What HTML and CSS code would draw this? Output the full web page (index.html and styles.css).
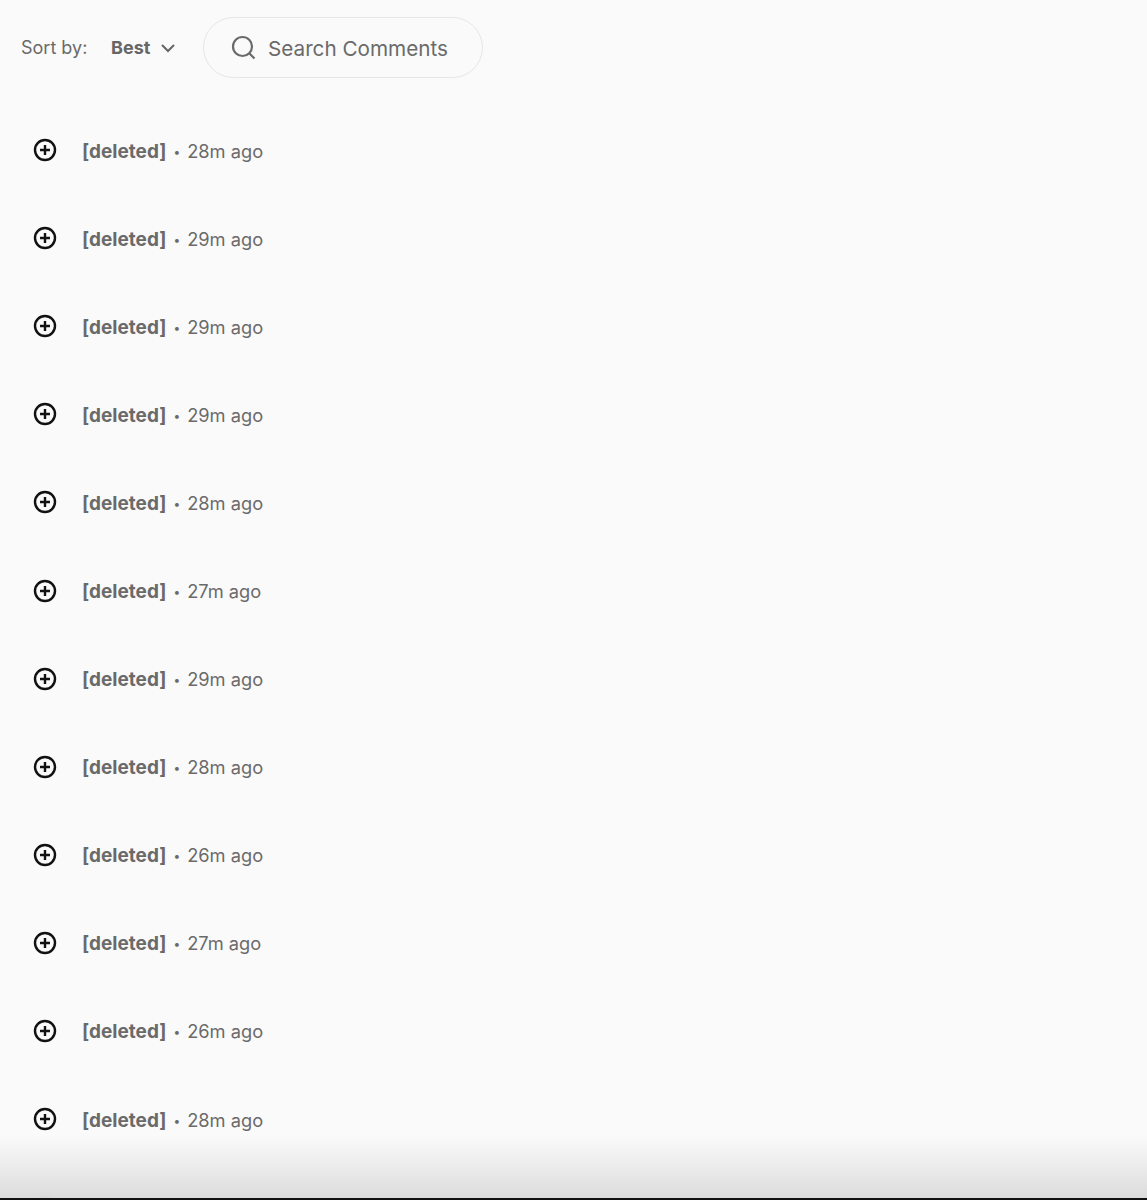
FILE: index.html
```html
<!DOCTYPE html>
<html lang="en">
<head>
  <meta charset="UTF-8" />
  <title>Comments</title>
  <link rel="stylesheet" href="styles.css">
</head>
<body>
  <div class="toolbar">
    <span class="sort-label">Sort by:</span>
    <button class="sort-btn">Best
      <svg class="chevron" width="16" height="16" viewBox="0 0 16 16"><path d="M2 5l6 6 6-6" /></svg>
    </button>
    <div class="search-box">
      <svg class="search-icon" width="26" height="26" viewBox="0 0 26 26"><circle cx="11.500" cy="11.500" r="9.500" /><path d="M18.500 18.500l5 5" /></svg>
      <span class="search-text">Search Comments</span>
    </div>
  </div>

  <div class="comments" id="comments">
    <div class="comment"><svg class="expand" width="24" height="24" viewBox="0 0 24 24"><circle cx="12" cy="12" r="10" /><path d="M12 7v10M7 12h10" /></svg><span class="author">[deleted]</span><span class="dot">•</span><span class="time">28m ago</span></div>
    <div class="comment"><svg class="expand" width="24" height="24" viewBox="0 0 24 24"><circle cx="12" cy="12" r="10" /><path d="M12 7v10M7 12h10" /></svg><span class="author">[deleted]</span><span class="dot">•</span><span class="time">29m ago</span></div>
    <div class="comment"><svg class="expand" width="24" height="24" viewBox="0 0 24 24"><circle cx="12" cy="12" r="10" /><path d="M12 7v10M7 12h10" /></svg><span class="author">[deleted]</span><span class="dot">•</span><span class="time">29m ago</span></div>
    <div class="comment"><svg class="expand" width="24" height="24" viewBox="0 0 24 24"><circle cx="12" cy="12" r="10" /><path d="M12 7v10M7 12h10" /></svg><span class="author">[deleted]</span><span class="dot">•</span><span class="time">29m ago</span></div>
    <div class="comment"><svg class="expand" width="24" height="24" viewBox="0 0 24 24"><circle cx="12" cy="12" r="10" /><path d="M12 7v10M7 12h10" /></svg><span class="author">[deleted]</span><span class="dot">•</span><span class="time">28m ago</span></div>
    <div class="comment"><svg class="expand" width="24" height="24" viewBox="0 0 24 24"><circle cx="12" cy="12" r="10" /><path d="M12 7v10M7 12h10" /></svg><span class="author">[deleted]</span><span class="dot">•</span><span class="time">27m ago</span></div>
    <div class="comment"><svg class="expand" width="24" height="24" viewBox="0 0 24 24"><circle cx="12" cy="12" r="10" /><path d="M12 7v10M7 12h10" /></svg><span class="author">[deleted]</span><span class="dot">•</span><span class="time">29m ago</span></div>
    <div class="comment"><svg class="expand" width="24" height="24" viewBox="0 0 24 24"><circle cx="12" cy="12" r="10" /><path d="M12 7v10M7 12h10" /></svg><span class="author">[deleted]</span><span class="dot">•</span><span class="time">28m ago</span></div>
    <div class="comment"><svg class="expand" width="24" height="24" viewBox="0 0 24 24"><circle cx="12" cy="12" r="10" /><path d="M12 7v10M7 12h10" /></svg><span class="author">[deleted]</span><span class="dot">•</span><span class="time">26m ago</span></div>
    <div class="comment"><svg class="expand" width="24" height="24" viewBox="0 0 24 24"><circle cx="12" cy="12" r="10" /><path d="M12 7v10M7 12h10" /></svg><span class="author">[deleted]</span><span class="dot">•</span><span class="time">27m ago</span></div>
    <div class="comment"><svg class="expand" width="24" height="24" viewBox="0 0 24 24"><circle cx="12" cy="12" r="10" /><path d="M12 7v10M7 12h10" /></svg><span class="author">[deleted]</span><span class="dot">•</span><span class="time">26m ago</span></div>
    <div class="comment"><svg class="expand" width="24" height="24" viewBox="0 0 24 24"><circle cx="12" cy="12" r="10" /><path d="M12 7v10M7 12h10" /></svg><span class="author">[deleted]</span><span class="dot">•</span><span class="time">28m ago</span></div>
    <div class="comment"><svg class="expand" width="24" height="24" viewBox="0 0 24 24"><circle cx="12" cy="12" r="10" /><path d="M12 7v10M7 12h10" /></svg></div>
  </div>

  <div class="bottom-fade"></div>
</body>
</html>
```

FILE: styles.css
```css
html, body {
  height: 1200px;
  overflow: hidden;
}

body {
  font-family: 'Inter', sans-serif;
  background-color: #fafafa;
  color: #6a6a6a;
  margin: 0;
  position: relative;
}

.toolbar {
  display: flex;
  align-items: center;
  padding: 17px 0 0 21px;
}

.sort-label {
  font-size: 18px;
  width: 90px;
}

.sort-btn {
  display: flex;
  align-items: center;
  gap: 10px;
  width: 92px;
  padding: 0;
  border: none;
  background: none;
  color: #666;
  font-family: inherit;
  font-size: 18px;
  font-weight: 700;
}

.chevron path {
  fill: none;
  stroke: #666;
  stroke-width: 2;
}

.search-box {
  display: flex;
  align-items: center;
  gap: 11px;
  box-sizing: border-box;
  width: 280px;
  height: 61px;
  padding-left: 27px;
  border: 1px solid #e6e6e6;
  border-radius: 31px;
  font-size: 20.7px;
}

.search-text {
  padding-top: 2px;
}

.search-icon circle,
.search-icon path {
  fill: none;
  stroke: #6a6a6a;
  stroke-width: 2.2;
}

.comments {
  padding-top: 29px;
}

.comment {
  display: flex;
  align-items: center;
  height: 88.1px;
  padding-left: 33px;
  font-size: 18.25px;
}

.expand {
  margin: 0 25px 2px 0;
  flex-shrink: 0;
}

.expand circle,
.expand path {
  fill: none;
  stroke: #111;
  stroke-width: 2.4;
}

.author {
  font-size: 19px;
  font-weight: 700;
  color: #6a6a6a;
}

.dot {
  margin: 0 7px;
  font-size: 12px;
}

.time {
  padding-bottom: 1px;
}

.bottom-fade {
  position: absolute;
  left: 0;
  right: 0;
  bottom: 0;
  height: 62px;
  background: linear-gradient(to bottom, rgba(250, 250, 250, 0), #dcdcdc);
  border-bottom: 2px solid #111;
}
```
